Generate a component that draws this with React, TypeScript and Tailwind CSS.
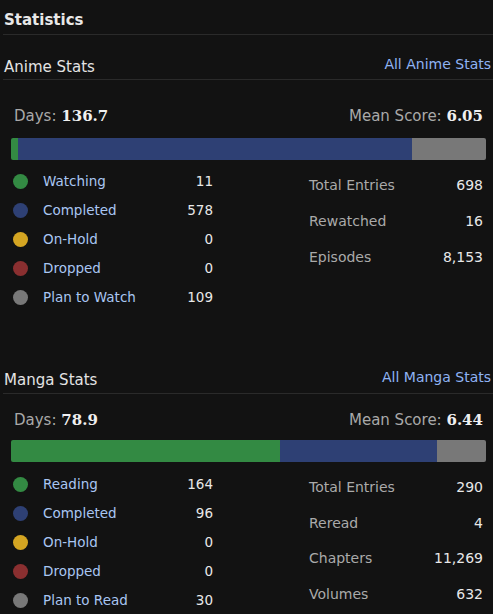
import React from "react";

type Item = { label: string; value: number; dot: string };
type Stat = { label: string; value: string };

const COLORS = {
  green: "bg-[#338a43]",
  blue: "bg-[#2e4074]",
  yellow: "bg-[#d4a522]",
  red: "bg-[#8a2f30]",
  gray: "bg-[#787878]",
};

function Section(props: {
  title: string;
  link: string;
  days: string;
  mean: string;
  items: Item[];
  stats: Stat[];
  headerClass: string;
  daysClass: string;
  barClass: string;
  legendClass: string;
  statRowClass: string;
}) {
  const total = props.items.reduce((s, i) => s + i.value, 0);
  return (
    <div>
      <div
        className={`flex h-[20px] box-content items-end justify-between border-b border-[#2a2a2a] ${props.headerClass}`}
      >
        <span className="pl-[1px] text-[15px] leading-[20px] text-[#e4e4e4]">
          {props.title}
        </span>
        <span className="relative -top-[3px] pr-[2px] text-[14px] leading-[20px] text-[#8fb3f2]">
          {props.link}
        </span>
      </div>
      <div className="ml-[8px] mr-[7px]">
        <div
          className={`flex items-center justify-between px-[3px] text-[15px] leading-[20px] ${props.daysClass}`}
        >
          <span className="text-[#a9a9a9]">
            Days:{" "}
            <span className="font-['DejaVu_Serif',serif] font-bold text-[#f0f0f0]">
              {props.days}
            </span>
          </span>
          <span className="text-[#a9a9a9]">
            Mean Score:{" "}
            <span className="font-['DejaVu_Serif',serif] font-bold text-[#f0f0f0]">
              {props.mean}
            </span>
          </span>
        </div>
        <div
          className={`flex h-[22px] overflow-hidden rounded-[2px] ${props.barClass}`}
        >
          {props.items
            .filter((i) => i.value > 0)
            .map((i) => (
              <div
                key={i.label}
                className={`h-full ${i.dot}`}
                style={{ width: `${(i.value / total) * 100}%` }}
              />
            ))}
        </div>
        <div className={`flex ${props.legendClass}`}>
          <div className="ml-[2px] w-[200px]">
            {props.items.map((i) => (
              <div key={i.label} className="flex h-[29px] items-center text-[13.5px]">
                <div className={`h-[15px] w-[15px] shrink-0 rounded-full ${i.dot}`} />
                <span className="ml-[15px] text-[#a9c6f2]">{i.label}</span>
                <span className="flex-1 text-right text-[#e8e8e8]">{i.value}</span>
              </div>
            ))}
          </div>
          <div className="ml-[96px] w-[174px]">
            {props.stats.map((s) => (
              <div
                key={s.label}
                className={`flex items-center justify-between text-[14px] ${props.statRowClass}`}
              >
                <span className="text-[#aaaaaa]">{s.label}</span>
                <span className="text-[#e8e8e8]">{s.value}</span>
              </div>
            ))}
          </div>
        </div>
      </div>
    </div>
  );
}

export default function App() {
  return (
    <div className="h-[614px] w-[493px] overflow-hidden bg-[#121212] font-['DejaVu_Sans',sans-serif]">
      <div className="ml-[3px]">
        <div className="border-b border-[#2a2a2a] pb-[4px] pl-[1px] pt-[10px] text-[15px] font-bold leading-[20px] text-[#e8e8e8]">
          Statistics
        </div>
        <Section
          title="Anime Stats"
          link="All Anime Stats"
          days="136.7"
          mean="6.05"
          headerClass="mt-[22px] pb-[2px]"
          daysClass="mt-[26px]"
          barClass="mt-[12px]"
          legendClass="mt-[7px]"
          statRowClass="h-[36px]"
          items={[
            { label: "Watching", value: 11, dot: COLORS.green },
            { label: "Completed", value: 578, dot: COLORS.blue },
            { label: "On-Hold", value: 0, dot: COLORS.yellow },
            { label: "Dropped", value: 0, dot: COLORS.red },
            { label: "Plan to Watch", value: 109, dot: COLORS.gray },
          ]}
          stats={[
            { label: "Total Entries", value: "698" },
            { label: "Rewatched", value: "16" },
            { label: "Episodes", value: "8,153" },
          ]}
        />
        <div className="h-[58px]" />
        <Section
          title="Manga Stats"
          link="All Manga Stats"
          days="78.9"
          mean="6.44"
          headerClass="pb-[3px]"
          daysClass="mt-[16px]"
          barClass="mt-[10px]"
          legendClass="mt-[8px]"
          statRowClass="h-[35.5px]"
          items={[
            { label: "Reading", value: 164, dot: COLORS.green },
            { label: "Completed", value: 96, dot: COLORS.blue },
            { label: "On-Hold", value: 0, dot: COLORS.yellow },
            { label: "Dropped", value: 0, dot: COLORS.red },
            { label: "Plan to Read", value: 30, dot: COLORS.gray },
          ]}
          stats={[
            { label: "Total Entries", value: "290" },
            { label: "Reread", value: "4" },
            { label: "Chapters", value: "11,269" },
            { label: "Volumes", value: "632" },
          ]}
        />
      </div>
    </div>
  );
}
